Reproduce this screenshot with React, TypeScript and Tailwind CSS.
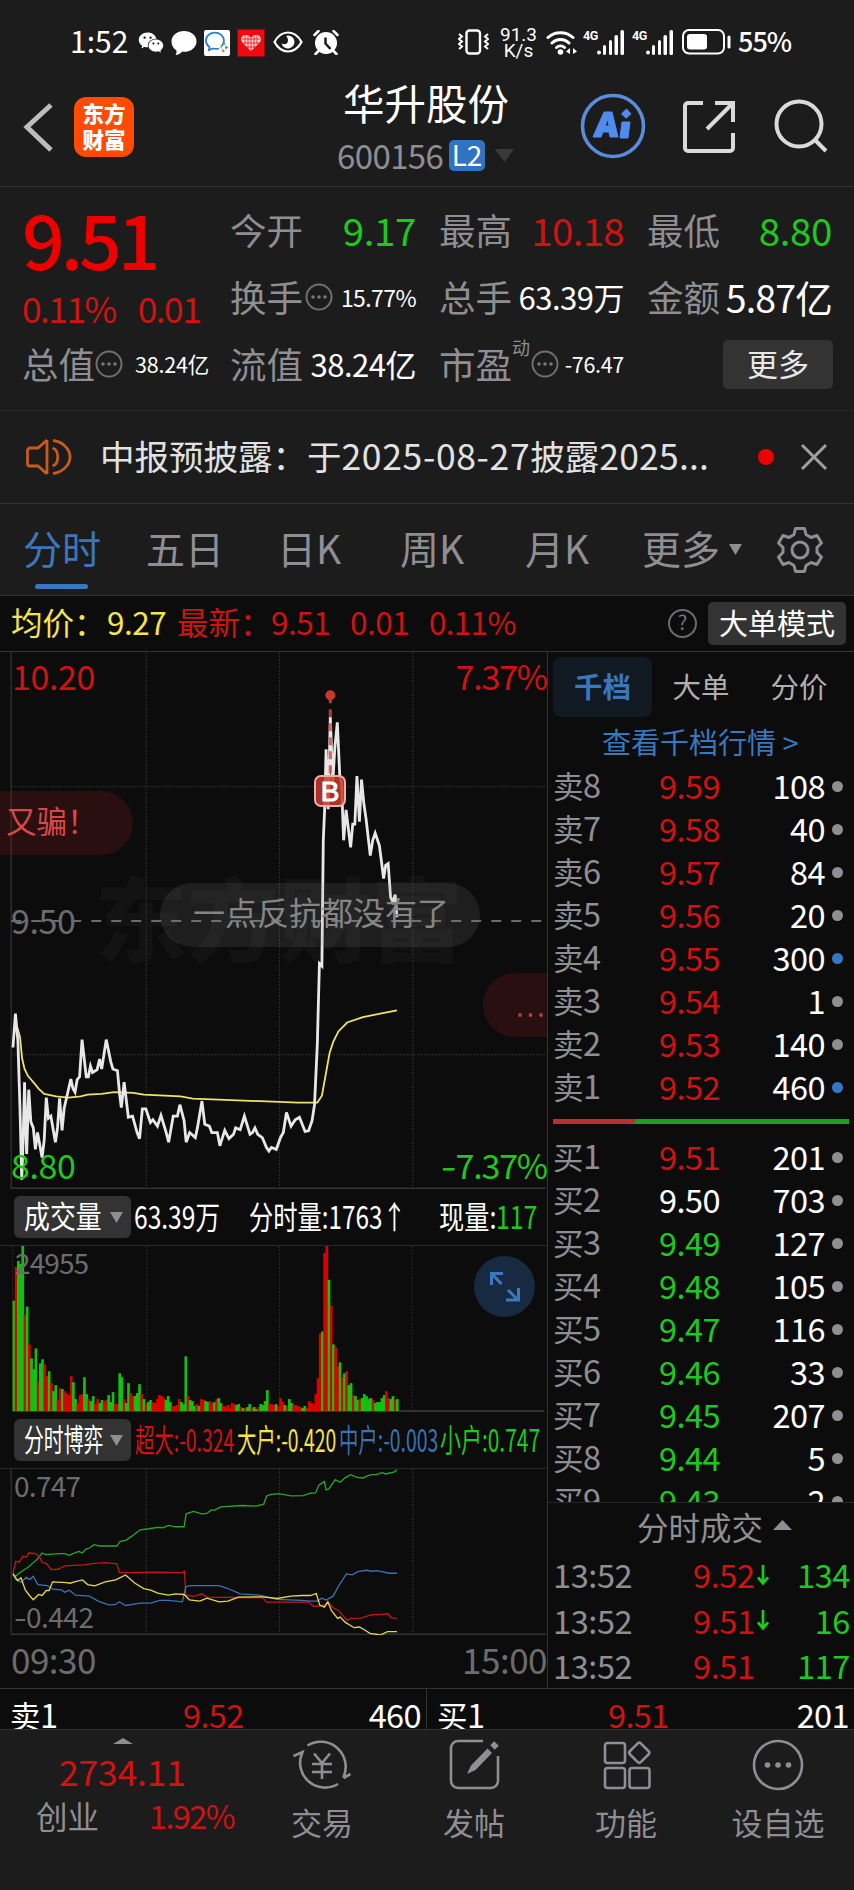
import React from "react";
import { AiFillWechat } from "react-icons/ai";

type Level = { label: string; n: string; price: string; qty: string; color?: string; big?: boolean };

const RED = "text-[#d01212]";
const GREEN = "text-[#1fc81f]";

const asks: Level[] = [
  { label: "卖", n: "8", price: "9.59", qty: "108" },
  { label: "卖", n: "7", price: "9.58", qty: "40" },
  { label: "卖", n: "6", price: "9.57", qty: "84" },
  { label: "卖", n: "5", price: "9.56", qty: "20" },
  { label: "卖", n: "4", price: "9.55", qty: "300", big: true },
  { label: "卖", n: "3", price: "9.54", qty: "1" },
  { label: "卖", n: "2", price: "9.53", qty: "140" },
  { label: "卖", n: "1", price: "9.52", qty: "460", big: true },
];

const bids: Level[] = [
  { label: "买", n: "1", price: "9.51", qty: "201" },
  { label: "买", n: "2", price: "9.50", qty: "703", color: "text-white" },
  { label: "买", n: "3", price: "9.49", qty: "127", color: GREEN },
  { label: "买", n: "4", price: "9.48", qty: "105", color: GREEN },
  { label: "买", n: "5", price: "9.47", qty: "116", color: GREEN },
  { label: "买", n: "6", price: "9.46", qty: "33", color: GREEN },
  { label: "买", n: "7", price: "9.45", qty: "207", color: GREEN },
  { label: "买", n: "8", price: "9.44", qty: "5", color: GREEN },
  { label: "买", n: "9", price: "9.43", qty: "2", color: GREEN },
];

const trades = [
  { time: "13:52", price: "9.52", down: true, qty: "134" },
  { time: "13:52", price: "9.51", down: true, qty: "16" },
  { time: "13:52", price: "9.51", down: false, qty: "117" },
];

// one entry per minute: direction + bar height
const volume =
  "g111 r145 g151 g148 g166 r97 g105 r67 g53 g42 g63 r30 g48 g52 r47 r35 g40 r28 g20 g26 r11 r23 g22 r20 r18 r16 r35 g29 g12 r8 r16 r17 g34 g17 r12 g10 g15 r7 r12 g8 g11 r10 r11 g16 g9 g19 r7 r7 g38 g34 r12 g8 g28 r18 r15 g15 g18 g27 r17 g12 r7 g9 g11 r9 r8 r12 r16 r15 r13 g11 g15 g9 r5 r5 r6 r12 g9 g7 g55 r15 g11 g10 g5 r7 g5 r12 r11 g10 g9 r10 r8 g9 r12 g13 g8 r5 r4 r6 r3 r8 r7 g6 g7 r4 g3 r3 g4 g7 r3 g4 g2 r4 g7 g6 g10 g21 r7 r7 r6 g7 r5 r13 r9 g6 r5 g12 g8 r6 r6 r5 r4 g3 g5 r3 r10 r8 r7 r17 r33 r78 g80 r159 r166 g132 r106 g67 r64 r45 g49 r34 g38 r40 g26 g28 r16 g15 g11 r12 g13 g17 g15 g12 g13 r11 g8 g9 g9 g13 g16 r20 r13 g12 g15 r11 g12".split(" ");

const priceLine =
  "37,1140 44,1045 51,1120 57,1310 62,1510 66,1400 70,1237 76,1438 82,1258 88,1348 95,1365 101,1425 107,1378 120,1448 126,1400 132,1280 138,1338 145,1332 158,1405 164,1365 170,1282 177,1372 183,1310 190,1280 202,1228 208,1255 214,1265 220,1230 227,1222 234,1118 246,1222 252,1222 258,1192 264,1210 277,1202 284,1172 290,1200 303,1118 316,1180 322,1200 335,1205 341,1270 346,1308 354,1237 366,1335 378,1332 391,1378 398,1395 406,1312 416,1312 429,1350 436,1342 449,1360 459,1330 474,1378 481,1405 494,1332 506,1332 513,1300 525,1345 531,1405 541,1378 557,1392 563,1365 576,1290 584,1355 597,1360 604,1378 620,1378 627,1415 641,1372 653,1395 666,1383 672,1365 685,1370 697,1332 713,1383 720,1378 727,1365 735,1383 748,1392 760,1420 767,1430 774,1420 788,1425 800,1392 808,1378 817,1322 830,1360 842,1342 854,1335 870,1375 880,1373 890,1345 897,1300 905,1130 911,905 918,912 922,560 926,470 930,305 936,473 942,215 949,400 955,300 962,230 969,380 974,400 980,560 987,475 1000,580 1006,515 1012,515 1018,380 1025,508 1031,390 1038,460 1044,500 1056,603 1063,560 1070,540 1082,575 1088,620 1094,667 1100,630 1107,625 1114,720 1120,732 1127,712 1132,775";

const avgLine =
  "50,1085 57,1110 63,1170 70,1200 80,1220 95,1237 110,1255 126,1270 160,1277 195,1280 230,1277 250,1272 290,1270 325,1265 380,1267 410,1272 515,1277 550,1283 660,1287 760,1291 850,1294 905,1294 918,1275 930,1210 940,1155 950,1125 965,1095 990,1070 1035,1055 1070,1048 1132,1036";

const smallLine =
  "37,518 45,525 55,515 80,498 105,475 120,455 130,460 170,457 185,457 197,462 208,457 225,450 235,455 245,443 255,440 268,430 285,434 333,434 343,420 360,416 375,405 400,385 425,382 450,378 465,379 480,372 500,376 525,376 531,337 552,330 575,337 590,336 602,326 612,326 630,316 690,312 730,314 752,308 760,284 770,279 795,276 830,283 865,282 885,275 900,274 910,250 925,240 930,265 938,262 956,234 970,242 985,228 1000,219 1018,227 1035,229 1055,220 1075,218 1090,213 1100,217 1125,211 1132,204";
const hugeLine =
  "37,518 45,480 55,482 65,465 75,468 82,455 100,456 113,467 120,483 133,487 146,505 165,504 185,494 240,491 270,486 300,484 333,488 341,514 450,513 520,514 526,510 530,583 555,585 575,578 590,588 750,590 760,603 880,603 895,616 925,612 935,602 950,620 965,628 990,658 1000,652 1030,651 1060,641 1085,640 1107,638 1115,650 1132,653";
const bigLine =
  "37,518 50,538 60,530 72,566 84,583 95,596 110,580 120,583 132,568 140,568 150,542 190,544 200,546 215,541 235,536 250,550 270,554 300,542 330,536 358,521 385,546 410,562 430,567 450,576 480,582 500,578 525,580 540,596 570,600 590,591 625,602 650,600 680,588 750,587 790,592 830,585 860,583 885,583 902,577 912,612 925,618 935,602 945,628 963,652 970,648 985,664 1010,680 1025,678 1040,687 1055,697 1085,702 1105,692 1132,692";
const midLine =
  "37,518 45,535 60,543 75,528 85,535 95,525 108,550 135,553 150,564 175,566 185,573 198,567 215,582 255,585 280,600 310,611 330,610 340,602 358,613 400,606 430,606 455,598 480,598 520,602 530,556 545,553 625,553 650,562 685,578 740,582 790,595 860,598 885,600 905,600 918,591 930,597 950,585 968,550 988,518 1005,521 1020,511 1045,507 1060,510 1075,508 1110,516 1132,516";

function Down({ className = "" }: { className?: string }) {
  return (
    <svg viewBox="0 0 14 12" preserveAspectRatio="none" className={className}>
      <path d="M0 0h14L7 12z" fill="currentColor" />
    </svg>
  );
}

function Dots() {
  return (
    <svg viewBox="0 0 28 28" className="h-[28px] w-[28px] shrink-0" fill="none" stroke="#707072" strokeWidth="2">
      <circle cx="14" cy="14" r="12.5" />
      <g fill="#77777a" stroke="none">
        <circle cx="8" cy="14" r="1.8" />
        <circle cx="14" cy="14" r="1.8" />
        <circle cx="20" cy="14" r="1.8" />
      </g>
    </svg>
  );
}

function Signal() {
  return (
    <svg viewBox="0 0 27 25" className="h-[25px] w-[27px]" fill="#fff">
      <circle cx="2" cy="22.5" r="2" />
      <rect x="6" y="15" width="3" height="10" rx="1.5" />
      <rect x="12" y="10" width="3" height="15" rx="1.5" />
      <rect x="17.500" y="5" width="3.500" height="20" rx="1.5" />
      <rect x="23.500" y="0" width="3.500" height="25" rx="1.5" />
    </svg>
  );
}

function StatusBar() {
  return (
    <div className="flex h-[78px] items-start pl-[70px] pt-[27px] text-white">
      <span className="mt-[-2px] w-[67px] text-[30px] leading-[30px]">1:52</span>
      <AiFillWechat className="mt-[1px] h-[29px] w-[28px]" />
      <svg viewBox="0 0 26 24" className="ml-[6px] mt-[4px] h-[24px] w-[26px]" fill="#fff">
        <path d="M13 0c7 0 12.500 4.600 12.500 10.400S20 20.800 13 20.800h-2C9.500 22.500 7 24 4.500 24c1-1.300 1.300-3 .8-4.800C2.300 17.300.5 14 .5 10.400.5 4.600 6 0 13 0z" />
      </svg>
      <svg viewBox="0 0 26 26" className="ml-[7px] mt-[3px] h-[26px] w-[26px]" fill="none">
        <rect width="26" height="26" rx="2" fill="#fff" />
        <path d="M17 16.500A9 8 0 1 0 5.500 17l-.5 3 4-1.500c2 .6 4 .6 6 0" stroke="#2b80c9" strokeWidth="1.800" />
        <path d="M18 14l2-2 2 3z" fill="#58a63c" />
        <path d="M21 16l3.500 1-3 2.500z" fill="#2b80c9" />
        <path d="M18 19l3 2-2.500 1.500z" fill="#dc5b2c" />
        <path d="M15 17l3-1v3z" fill="#f0b72b" />
      </svg>
      <svg viewBox="0 0 28 28" className="ml-[7px] mt-[2px] h-[28px] w-[28px]">
        <rect x="0.500" y="0.500" width="27" height="27" fill="#ee0a0f" stroke="#8b0d10" />
        <path d="M14 22L5 13c-2-3 0-7 3.500-7 2.500 0 4 1 5.500 3 1.500-2 3-3 5.500-3 3.500 0 5.500 4 3.500 7z" fill="#ffd5d5" />
        <path d="M8 6v9M11 7v12M14 9v13M17 7v12M20 6v9M5 10h18M6 14h16M10 18h8" stroke="#ee0a0f" fill="none" strokeWidth="0.800" />
      </svg>
      <svg viewBox="0 0 30 22" className="ml-[8px] mt-[4px] h-[22px] w-[30px]" fill="none" stroke="#fff" strokeWidth="2.200">
        <path d="M1.500 11C5 4.500 9.500 1.500 15 1.500S25 4.500 28.500 11C25 17.500 20.500 20.500 15 20.500S5 17.500 1.500 11z" />
        <path d="M15 4.500a6.500 6.500 0 1 1-6.400 7.800c3 2 6.400.8 6.400-2.800 0-2-.8-3.500-2-4.500z" fill="#fff" stroke="none" />
      </svg>
      <svg viewBox="0 0 26 25" className="ml-[10px] mt-[3px] h-[25px] w-[26px]" fill="none" stroke="#fff" strokeWidth="2.500">
        <circle cx="13" cy="13" r="11" fill="#fff" stroke="none" />
        <path d="M1.500 5L5.500 1M24.500 5l-4-4M5.500 21L2.500 24M20.500 21l3 3" strokeLinecap="round" />
        <path d="M12.500 7.500v6l5 5.500" stroke="#1c1c1c" />
      </svg>
      <svg viewBox="0 0 31 26" className="ml-[119px] mt-[2px] h-[26px] w-[31px]" fill="none" stroke="#fff" strokeWidth="2.400">
        <rect x="8.500" y="1.500" width="13.500" height="23" rx="3" />
        <path d="M1 5l3 2.500-3 2.500 3 2.500L1 15l3 2.500L1 20M30 5l-3 2.500 3 2.500-3 2.500 3 2.500-3 2.500 3 2.500" strokeWidth="2" />
      </svg>
      <div className="ml-[11px] flex w-[37px] flex-col items-center font-['Roboto'] text-[19px] leading-[16px]">
        <span>91.3</span>
        <span>K/s</span>
      </div>
      <svg viewBox="0 0 31 26" className="ml-[9px] mt-[2px] h-[26px] w-[31px]" fill="none" stroke="#fff" strokeWidth="3" strokeLinecap="round">
        <path d="M2 8.500a18.500 18.500 0 0 1 25 0M6 14a12 12 0 0 1 17 0M10.500 18.500a6 6 0 0 1 8 0" />
        <circle cx="14.500" cy="23" r="2.800" fill="#fff" stroke="none" />
        <path d="M20 22.500l4-3.500v6zM31 22.500l-4-3.500v6z" fill="#fff" stroke="none" />
      </svg>
      <span className="ml-[6px] mt-[1px] w-[14px] font-['Roboto'] text-[12.500px] font-bold leading-[15px] tracking-[-0.5px]">4G</span>
      <span className="mt-[3px]"><Signal /></span>
      <span className="ml-[8px] mt-[1px] w-[14px] font-['Roboto'] text-[12.500px] font-bold leading-[15px] tracking-[-0.5px]">4G</span>
      <span className="mt-[3px]"><Signal /></span>
      <svg viewBox="0 0 49 26" className="ml-[9px] mt-[2px] h-[26px] w-[49px]" fill="none">
        <rect x="1" y="1" width="41" height="23.500" rx="6" stroke="#fff" strokeWidth="2" />
        <rect x="5" y="5" width="20" height="15.500" rx="3" fill="#fff" />
        <rect x="45.500" y="6.500" width="3" height="13" rx="1.500" fill="#fff" />
      </svg>
      <span className="ml-[7px] text-[27px] font-medium leading-[27px] tracking-[-1px]">55%</span>
    </div>
  );
}

function Header() {
  return (
    <div className="flex h-[109px] items-start border-b border-[#333] pl-[22px]">
      <svg viewBox="0 0 32 50" className="mt-[24px] h-[50px] w-[32px]" fill="none" stroke="#bdbdbd" strokeWidth="5">
        <path d="M29 3L5 25l24 23" />
      </svg>
      <div className="ml-[20px] mt-[19px] flex h-[60px] w-[60px] flex-col items-center justify-center rounded-[12px] bg-[#ff4b05] pb-[3px] text-[21.500px] font-black leading-[26px] text-white">
        <span>东方</span>
        <span>财富</span>
      </div>
      <div className="ml-[203px] w-[182px]">
        <div className="pl-[6px] text-[41.500px] leading-[48px] text-white">华升股份</div>
        <div className="mt-[9px] flex items-center whitespace-nowrap">
          <span className="w-[112px] text-[33px] leading-[40px] tracking-[-0.6px] text-[#8e8e93]">600156</span>
          <span className="h-[31px] w-[36px] rounded-[5px] bg-[#2f74c0] text-center text-[28px] leading-[28px] text-white">L2</span>
          <Down className="ml-[10px] h-[13px] w-[19px] text-[#3a3a3a]" />
        </div>
      </div>
      <svg viewBox="0 0 66 66" className="ml-[61px] mt-[15px] h-[66px] w-[66px]" fill="none">
        <circle cx="33" cy="33" r="30.500" stroke="#5a8cdc" strokeWidth="3.600" />
        <path d="M13 44L24 19h8l6 25h-8l-1-5h-6l-2 5zM25 33h4l-1-7zM42 29h8l-2 16h-8zM46.500 16l4.500 4.800-5 4.500-4.500-4.500z" fill="#4f8cf0" fillRule="evenodd" stroke="#4f8cf0" strokeLinejoin="round" />
      </svg>
      <svg viewBox="0 0 52 52" className="ml-[37px] mt-[23px] h-[52px] w-[52px]" fill="none" stroke="#dadada" strokeWidth="4">
        <path d="M20 2H5a3 3 0 0 0-3 3v42a3 3 0 0 0 3 3h42a3 3 0 0 0 3-3V32M32 2h18v19M49 3L24 28" />
      </svg>
      <svg viewBox="0 0 54 54" className="ml-[39px] mt-[21px] h-[54px] w-[54px]" fill="none" stroke="#dadada" strokeWidth="4">
        <circle cx="25" cy="25" r="22.500" />
        <path d="M41 41l11 11" />
      </svg>
    </div>
  );
}

function Cell({ label, children }: { label: string; children: React.ReactNode }) {
  return (
    <div className="flex h-[40px] items-center justify-between whitespace-nowrap">
      <span className="text-[36.500px] leading-[40px] text-[#8e8e93]">{label}</span>
      {children}
    </div>
  );
}

function Quote() {
  return (
    <div className="flex h-[224px] border-b border-[#262626] text-white">
      <div className="flex w-[230px] flex-col pl-[22px]">
        <div className="mt-[12px] text-[75px] font-medium leading-[78px] tracking-[-4px] text-[#ee0000]">9.51</div>
        <div className={"mt-[11px] flex h-[40px] gap-[22px] text-[35.500px] leading-[40px] tracking-[-1.600px] " + RED}>
          <span>0.11%</span>
          <span>0.01</span>
        </div>
        <div className="mt-[16px] flex h-[40px] w-[187px] items-center whitespace-nowrap">
          <span className="text-[36.500px] leading-[40px] text-[#8e8e93]">总值</span>
          <span><Dots /></span>
          <span className="ml-auto text-[21.500px] tracking-[-0.2px]">38.24亿</span>
        </div>
      </div>
      <div className="grid grow grid-cols-[186px_185px_185px] content-start gap-x-[23px] gap-y-[27px] pt-[23px]">
        <Cell label="今开"><span className={"text-[38.500px] tracking-[-0.4px] " + GREEN}>9.17</span></Cell>
        <Cell label="最高"><span className={"text-[38.500px] tracking-[-0.7px] " + RED}>10.18</span></Cell>
        <Cell label="最低"><span className={"text-[38.500px] tracking-[-0.4px] " + GREEN}>8.80</span></Cell>
        <Cell label="换手">
          <span className="ml-[2px] mr-auto"><Dots /></span>
          <span className="text-[23px] tracking-[-0.6px]">15.77%</span>
        </Cell>
        <Cell label="总手"><span className="text-[31px] tracking-[-0.5px]">63.39万</span></Cell>
        <Cell label="金额"><span className="text-[37.500px] tracking-[-0.8px]">5.87亿</span></Cell>
        <Cell label="流值"><span className="text-[31px] tracking-[-0.5px]">38.24亿</span></Cell>
        <Cell label="市盈">
          <span className="mt-[-34px] text-[18px] leading-[18px] text-[#8e8e93]">动</span>
          <span className="ml-[1px] mr-auto"><Dots /></span>
          <span className="text-[21.500px] tracking-[-0.3px]">-76.47</span>
        </Cell>
        <div className="ml-[76px] mt-[-4px] h-[49px] w-[110px] rounded-[5px] bg-[#333] text-center text-[31px] leading-[45px] text-[#e8e8e8]">更多</div>
      </div>
    </div>
  );
}

function Notice() {
  return (
    <div className="flex h-[93px] items-center border-b border-[#333] pl-[26px]">
      <svg viewBox="0 0 46 38" className="h-[38px] w-[46px]" fill="none" stroke="#c85a1e" strokeWidth="2.800">
        <path d="M21 2v34M21 2l-9 8H4a2.500 2.500 0 0 0-2.500 2.500v13A2.500 2.500 0 0 0 4 28h8l9 8" />
        <path d="M26.500 10c7 2 7 16 0 18M27 2.500c9 1 17 8 17 16.500s-8 15.500-17 16.500" />
      </svg>
      <div className="ml-[28px] mt-[-5px] w-[613px] whitespace-nowrap text-[34.500px] leading-[44px] text-[#e2e2e2]">
        中报预披露：于<span className="text-[35.500px] tracking-[0.650px]">2025-08-27</span>披露<span className="text-[35.500px] tracking-[0.2px]">2025...</span>
      </div>
      <span className="ml-[45px] h-[16px] w-[16px] rounded-full bg-[#ee0000]" />
      <svg viewBox="0 0 28 28" className="ml-[26px] h-[28px] w-[28px]" stroke="#a0a0a0" strokeWidth="3">
        <path d="M2 2l24 24M26 2L2 26" />
      </svg>
    </div>
  );
}

function Tabs() {
  return (
    <div className="flex h-[92px] border-b border-[#333] pl-[23px] pt-[20px] text-[39px] leading-[47px] text-[#8e8e93]">
      <div className="flex w-[123px] flex-col text-[#3a77bd]">
        分时
        <span className="ml-[12px] mt-[13px] h-[5px] w-[53px] rounded-full bg-[#3a77bd]" />
      </div>
      <span className="w-[131px]">五日</span>
      <span className="w-[123px]">日K</span>
      <span className="w-[125px]">周K</span>
      <span className="w-[117px]">月K</span>
      <span className="w-[87px]">更多</span>
      <Down className="mt-[20px] h-[11px] w-[13px]" />
      <svg viewBox="0 0 46 46" className="ml-[35px] mt-[3px] h-[46px] w-[46px]" fill="none" stroke="#8e8e93" strokeWidth="3" strokeLinejoin="round">
        <path d="M18.500 1.500h9l1.500 6 5 3 6-2 4.500 7.500-4.500 4.500v5l4.500 4.500-4.500 7.500-6-2-5 3-1.500 6h-9l-1.500-6-5-3-6 2L1.500 30 6 25.500v-5L1.500 16 6 8.500l6 2 5-3z" />
        <circle cx="23" cy="23" r="8" />
      </svg>
    </div>
  );
}

function PriceInfo() {
  return (
    <div className="flex h-[56px] items-center whitespace-nowrap border-b border-[#333] pl-[11px] text-[31.500px] leading-[40px]">
      <span className="mt-[-5px] w-[96px] text-[#f5e353]">均价：</span>
      <span className="mt-[-5px] w-[70px] tracking-[-0.5px] text-[#f5e353]">9.27</span>
      <span className={"mt-[-5px] w-[94px] " + RED}>最新：</span>
      <span className={"mt-[-5px] w-[79px] tracking-[-0.5px] " + RED}>9.51</span>
      <span className={"mt-[-5px] w-[79px] tracking-[-0.5px] " + RED}>0.01</span>
      <span className={"mt-[-5px] w-[239px] tracking-[-0.7px] " + RED}>0.11%</span>
      <div className="h-[29px] w-[29px] rounded-full border-2 border-[#6c6c6e] text-center text-[20px] leading-[22px] text-[#77777a]">?</div>
      <div className="ml-[11px] h-[43px] w-[138px] rounded-[5px] bg-[#333] text-center text-[29px] leading-[40px] text-white">大单模式</div>
    </div>
  );
}

function Grid({ top, height }: { top: number; height: number }) {
  return (
    <g stroke="#2c2c2e" strokeWidth="1.200" fill="none">
      {[417, 797, 1177].map((x) => (
        <path key={x} d={`M${x} ${top}v${height}`} strokeDasharray="2 1.500" vectorEffect="non-scaling-stroke" />
      ))}
      <path d={`M32 ${top}v${height}`} strokeWidth="1.500" vectorEffect="non-scaling-stroke" />
      <path d={`M32 ${top + height - 2}h1525`} stroke="#333" strokeWidth="1.800" vectorEffect="non-scaling-stroke" />
    </g>
  );
}

function PriceChart() {
  return (
    <div className="relative h-[537px] overflow-hidden">
      <div className="absolute left-[95px] top-[203px] whitespace-nowrap text-[92px] font-black leading-[120px] text-[#131313]">东方财富</div>
      <svg viewBox="0 33 1560 1503" preserveAspectRatio="none" className="absolute inset-0 h-full w-full" fill="none">
        <Grid top={33} height={1503} />
        <path d="M32 410h1525M32 1160h1525" stroke="#2c2c2e" strokeWidth="1.200" strokeDasharray="2 1.500" vectorEffect="non-scaling-stroke" />
        <path d="M32 786h1525" stroke="#8a8a8c" strokeWidth="1.400" strokeDasharray="10 10" vectorEffect="non-scaling-stroke" />
        <polyline points={avgLine} stroke="#efe16a" strokeWidth="1.800" vectorEffect="non-scaling-stroke" />
        <polyline points={priceLine} stroke="#e8e8e8" strokeWidth="2.800" vectorEffect="non-scaling-stroke" />
        <path d="M942 154V380" stroke="#d8452f" strokeOpacity="0.800" strokeWidth="3.200" strokeDasharray="8 6" vectorEffect="non-scaling-stroke" />
        <circle cx="942" cy="154" r="14" fill="#c8392b" />
      </svg>
      <div className={"absolute left-[12px] top-[2px] text-[34px] leading-[44px] tracking-[-0.4px] " + RED}>10.20</div>
      <div className={"absolute right-[0px] top-[2px] text-[34px] leading-[44px] tracking-[-1.200px] " + RED}>7.37%</div>
      <div className="absolute left-[11px] top-[246px] text-[34px] leading-[44px] tracking-[-0.4px] text-[#6c6c6e]">9.50</div>
      <div className={"absolute left-[11px] top-[491px] text-[34px] leading-[44px] tracking-[-0.4px] " + GREEN}>8.80</div>
      <div className={"absolute right-[0px] top-[491px] text-[34px] leading-[44px] tracking-[-1.200px] " + GREEN}>
        <span className="inline-block w-[15px] origin-left scale-x-[1.300]">-</span>7.37%
      </div>
      <div className="absolute left-0 top-[139px] h-[64px] w-[133px] rounded-r-full bg-[#a01e1e]/20 pl-[6px] text-[30.500px] leading-[59px] text-[#d8484a]">又骗！</div>
      <div className="absolute left-[160px] top-[231px] h-[64px] w-[320px] whitespace-nowrap rounded-full bg-[#888]/15 pl-[33px] text-[32px] leading-[57px] text-[#858585]">一点反抗都没有了</div>
      <div className="absolute right-0 top-[321px] h-[64px] w-[64px] rounded-l-full bg-[#a01e1e]/20">
        <svg viewBox="0 0 64 64" className="h-full w-full" fill="#b84040">
          <circle cx="37" cy="42" r="1.900" />
          <circle cx="47.500" cy="42" r="1.900" />
          <circle cx="58" cy="42" r="1.900" />
        </svg>
      </div>
      <div className="absolute left-[314px] top-[123px] h-[32px] w-[32px] rounded-[7px] border-2 border-[#eab0a8] bg-[#c8392b]/85 text-center font-['Liberation_Sans'] text-[28px] leading-[29px] text-white [-webkit-text-stroke:1px_white]">B</div>
    </div>
  );
}

function Picker({ children, squeeze }: { children: string; squeeze: string }) {
  return (
    <div className="flex h-[42px] w-[117px] shrink-0 items-center rounded-[6px] bg-[#333] pl-[10px]">
      <div className="w-[86px] whitespace-nowrap">
        <div className={"mt-[-5px] w-fit origin-left text-[30.500px] leading-[42px] text-white " + squeeze}>{children}</div>
      </div>
      <Down className="h-[11px] w-[13px] text-[#8e8e93]" />
    </div>
  );
}

function VolumeChart() {
  return (
    <div className="relative h-[167px] border-t border-[#2a2a2a]">
      <svg viewBox="0 0 547 167" className="absolute inset-0 h-full w-full">
        <path d="M11 0V167M146.200 0V167M279.500 0V167M412.800 0V167" stroke="#2c2c2e" strokeDasharray="2 1.500" />
        <path d="M11 166H546" stroke="#333" strokeWidth="1.800" />
        {volume.map((v, i) => (
          <rect
            key={i}
            x={11 + i * 2.217}
            y={166 - Number(v.slice(1))}
            width="2.700"
            height={Number(v.slice(1))}
            fill={v[0] === "g" ? "#12d012" : "#ea0000"}
            fillOpacity="0.920"
          />
        ))}
      </svg>
      <div className="absolute left-[15px] top-[-3px] text-[28px] leading-[38px] tracking-[-0.9px] text-[#6c6c6e]">24955</div>
      <div className="absolute left-[474px] top-[10px] h-[61px] w-[61px] rounded-full bg-[#182a41]">
        <svg viewBox="0 0 61 61" className="h-full w-full" fill="none" stroke="#3a78c0" strokeWidth="3">
          <path d="M17.500 29V17.500H29M18 18l9.500 10M44.500 32v12H32M44 44L34 34" />
        </svg>
      </div>
    </div>
  );
}

function GameChart() {
  return (
    <div className="relative h-[167px] border-t border-[#2a2a2a]">
      <svg viewBox="0 202 1560 500" preserveAspectRatio="none" className="absolute inset-0 h-full w-full" fill="none" strokeWidth="1.300">
        <Grid top={202} height={500} />
        <polyline points={smallLine} stroke="#28a828" vectorEffect="non-scaling-stroke" />
        <polyline points={hugeLine} stroke="#c01818" vectorEffect="non-scaling-stroke" />
        <polyline points={midLine} stroke="#3a72b4" vectorEffect="non-scaling-stroke" />
        <polyline points={bigLine} stroke="#e6d84c" vectorEffect="non-scaling-stroke" />
      </svg>
      <div className="absolute left-[14px] top-[-3px] text-[28px] leading-[38px] tracking-[-0.700px] text-[#6c6c6e]">0.747</div>
      <div className="absolute left-[14px] top-[128px] text-[28px] leading-[38px] tracking-[-0.5px] text-[#6c6c6e]">
        <span className="inline-block w-[12px] origin-left scale-x-[1.300]">-</span>0.442
      </div>
    </div>
  );
}

function Squeezed({ text, box, className = "" }: { text: string; box: string; className?: string }) {
  return (
    <div className={"shrink-0 whitespace-nowrap " + box}>
      <div className={"mt-[-5px] w-fit origin-left leading-[42px] " + className}>{text}</div>
    </div>
  );
}

function Charts() {
  return (
    <div className="w-[548px] shrink-0 border-r border-[#333]">
      <PriceChart />
      <div className="flex h-[56px] items-center pl-[14px] text-[31.500px] text-white">
        <Picker squeeze="scale-x-[0.85]">成交量</Picker>
        <Squeezed text="63.39万" box="ml-[3px] w-[115px]" className="scale-x-[0.78]" />
        <Squeezed text="分时量:1763↑" box="w-[190px]" className="scale-x-[0.77]" />
        <Squeezed text="现量:" box="w-[57px]" className="scale-x-[0.8]" />
        <Squeezed text="117" box="w-[42px]" className={"scale-x-[0.79] " + GREEN} />
      </div>
      <VolumeChart />
      <div className="flex h-[56px] items-center pl-[14px] text-[31.500px]">
        <Picker squeeze="scale-x-[0.65]">分时博弈</Picker>
        <Squeezed text="超大:-0.324" box="ml-[4px] w-[102px]" className={"scale-x-[0.615] " + RED} />
        <Squeezed text="大户:-0.420" box="w-[102px]" className="scale-x-[0.615] text-[#f5e34a]" />
        <Squeezed text="中户:-0.003" box="w-[101px]" className="scale-x-[0.615] text-[#3a72b4]" />
        <Squeezed text="小户:0.747" box="w-[100px]" className={"scale-x-[0.665] " + GREEN} />
      </div>
      <GameChart />
      <div className="flex h-[53px] justify-between pl-[11px] text-[35px] leading-[47px] tracking-[-0.5px] text-[#6c6c6e]">
        <span>09:30</span>
        <span>15:00</span>
      </div>
    </div>
  );
}

function LevelRow({ row }: { row: Level }) {
  return (
    <div className="flex h-[43px] items-center text-[32.500px] leading-[43px] tracking-[-0.5px]">
      <span className="w-[106px] whitespace-nowrap text-[#8e8e93]">
        <span className="text-[30.500px]">{row.label}</span>
        {row.n}
      </span>
      <span className={"grow " + (row.color ?? RED)}>{row.price}</span>
      <span className="text-white">{row.qty}</span>
      <span className={"ml-[7px] mr-[11px] mt-[4px] h-[11px] w-[11px] rounded-full " + (row.big ? "bg-[#3478c4]" : "bg-[#8e8e93]")} />
    </div>
  );
}

function Book() {
  return (
    <div className="flex grow flex-col pl-[5px]">
      <div className="mt-[5px] flex h-[60px] text-[28.500px] leading-[57px] text-[#b0b0b0]">
        <span className="h-full w-[99px] rounded-[8px] bg-[#111a23] text-center font-bold text-[#3a77bd]">千档</span>
        <span className="w-[98px] text-center">大单</span>
        <span className="w-[98px] text-center">分价</span>
      </div>
      <div className="h-[49px] pl-[49px] text-[29px] leading-[49px] text-[#3a77bd]">查看千档行情 &gt;</div>
      <div className="mt-[-3px]">
        {asks.map((r) => <LevelRow key={r.n} row={r} />)}
      </div>
      <div className="mt-[12px] flex h-[5px] w-[296px] bg-[#1f9f1f]">
        <span className="w-[84px] bg-[#b83030] [clip-path:polygon(0_0,100%_0,95%_100%,0_100%)]" />
      </div>
      <div className="mt-[10px] h-[368px] overflow-hidden">
        {bids.map((r) => <LevelRow key={r.n} row={r} />)}
      </div>
      <div className="ml-[-5px] flex h-[49px] items-center border-t border-[#262626] pl-[89px] text-[#8e8e93]">
        <span className="mt-[-2px] text-[31.500px] leading-[40px]">分时成交</span>
        <Down className="ml-[10px] mt-[-4px] h-[10px] w-[19px] rotate-180" />
      </div>
      {trades.map((t, i) => (
        <div key={i} className="flex h-[45.500px] items-center text-[32.500px] leading-[45px] tracking-[-0.4px]">
          <span className="w-[140px] text-[#8e8e93]">{t.time}</span>
          <span className={"w-[63px] " + RED}>{t.price}</span>
          {t.down && (
            <svg viewBox="0 0 14 24" className="mt-[2px] h-[22px] w-[14px]" fill="none" stroke="#1fc81f" strokeWidth="3">
              <path d="M7 1v20M1.500 14.500L7 21l5.500-6.500" />
            </svg>
          )}
          <span className={"ml-auto mr-[4px] " + GREEN}>{t.qty}</span>
        </div>
      ))}
    </div>
  );
}

function TopOfBook() {
  const cls = "flex h-full w-[427px] items-start pl-[10px] pr-[5px]";
  return (
    <div className="flex h-[41px] overflow-hidden border-t border-[#333] text-[32.500px] leading-[50px] tracking-[-0.6px] text-white">
      <div className={cls + " border-r border-[#333]"}>
        <span className="w-[173px]"><span className="text-[30.500px]">卖</span>1</span>
        <span className={RED}>9.52</span>
        <span className="ml-auto">460</span>
      </div>
      <div className={cls}>
        <span className="w-[171px]"><span className="text-[30.500px]">买</span>1</span>
        <span className={RED}>9.51</span>
        <span className="ml-auto">201</span>
      </div>
    </div>
  );
}

function NavItem({ label, children }: { label: string; children: React.ReactNode }) {
  return (
    <div className="flex w-[152px] flex-col items-center pt-[9px]">
      <svg viewBox="0 0 58 52" className="h-[52px] w-[58px]" fill="none" stroke="#8e8e93" strokeWidth="2.600">
        {children}
      </svg>
      <span className="mt-[9px] text-[31px] leading-[44px]">{label}</span>
    </div>
  );
}

function BottomNav() {
  return (
    <div className="flex h-[161px] border-t border-[#333] bg-[#1c1c1c] text-[#8e8e93]">
      <div className="flex w-[246px] flex-col">
        <Down className="ml-[113px] mt-[8px] h-[6px] w-[20px] rotate-180" />
        <span className={"ml-[59px] mt-[5px] text-[35.500px] leading-[44px] tracking-[-0.2px] " + RED}>2734.11</span>
        <div className="flex pl-[36px] leading-[44px]">
          <span className="w-[113px] text-[31.500px]">创业</span>
          <span className={"text-[32.500px] tracking-[-1.600px] " + RED}>1.92%</span>
        </div>
      </div>
      <NavItem label="交易">
        <path d="M14.500 6.500A25 25 0 0 1 50.500 38M50.500 39l1.500-4M50.500 39l7-4M45 45A25 25 0 0 1 9 14M0.500 17l9-4-1.500 5" />
        <path d="M21 14.500l8 9.500 8-9.500M19 25h20M19 33h20M29 24v16" />
      </NavItem>
      <NavItem label="发帖">
        <path d="M38 2H13a7 7 0 0 0-7 7v33a7 7 0 0 0 7 7h33a7 7 0 0 0 7-7V17" />
        <path d="M42.500 9.500L26 26.500l-4 8.500 8.500-4L47 14z" fill="#8e8e93" stroke="none" />
        <path d="M47.500 8.500l4-4" strokeWidth="6.500" />
      </NavItem>
      <NavItem label="功能">
        <rect x="8" y="4" width="20" height="20" rx="2.500" />
        <rect x="8" y="29" width="20" height="20" rx="2.500" />
        <rect x="32.500" y="29" width="20" height="20" rx="2.500" />
        <rect x="34.500" y="6" width="15.500" height="15.500" rx="2.500" transform="rotate(45 42.250 13.750)" />
      </NavItem>
      <NavItem label="设自选">
        <circle cx="29" cy="26" r="24" />
        <g fill="#8e8e93" stroke="none">
          <circle cx="18.500" cy="26" r="2.800" />
          <circle cx="29" cy="26" r="2.800" />
          <circle cx="39.500" cy="26" r="2.800" />
        </g>
      </NavItem>
    </div>
  );
}

export default function App() {
  return (
    <div className="h-[1890px] w-[854px] overflow-hidden bg-[#0c0c0c] font-['Noto_Sans_CJK_SC',sans-serif]">
      <div className="bg-[#1c1c1c]">
        <StatusBar />
        <Header />
        <Quote />
        <Notice />
        <Tabs />
      </div>
      <PriceInfo />
      <div className="flex h-[1036px]">
        <Charts />
        <Book />
      </div>
      <TopOfBook />
      <BottomNav />
    </div>
  );
}
